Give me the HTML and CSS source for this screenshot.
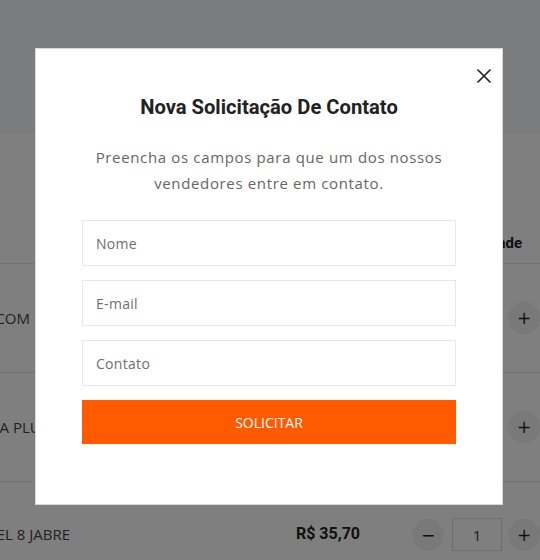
FILE: index.html
```html
<!DOCTYPE html>
<html lang="pt-BR">
<head>
<meta charset="utf-8">
<title>Carrinho</title>
<link rel="stylesheet" href="styles.css">
</head>
<body>
<div class="page">
  <header class="topbar"></header>
  <main class="cart">
    <div class="cart-head">
      <span class="head-qty">Quantidade</span>
    </div>
    <div class="cart-row">
      <div class="name"><span>FONE HEADSET COM FIO 2</span></div>
      <div class="price">R$ 49,90</div>
      <div class="qty">
        <button class="circle">&minus;</button>
        <div class="qty-box">1</div>
        <button class="circle">+</button>
      </div>
    </div>
    <div class="cart-row">
      <div class="name"><span>CAIXA DE SOM ALPHA PLUS 36</span></div>
      <div class="price">R$ 89,90</div>
      <div class="qty">
        <button class="circle">&minus;</button>
        <div class="qty-box">1</div>
        <button class="circle">+</button>
      </div>
    </div>
    <div class="cart-row">
      <div class="name"><span>CABO USB MODEL 8 JABRE</span></div>
      <div class="price">R$ 35,70</div>
      <div class="qty">
        <button class="circle">&minus;</button>
        <div class="qty-box">1</div>
        <button class="circle">+</button>
      </div>
    </div>
  </main>
</div>

<div class="overlay">
  <div class="modal">
    <button class="close" aria-label="Fechar">
      <svg width="16" height="16" viewBox="0 0 16 16"><path d="M1.5 1.5L14.5 14.5M14.5 1.5L1.5 14.5" stroke="#222" stroke-width="1.6" fill="none"/></svg>
    </button>
    <h2 class="title">Nova Solicitação De Contato</h2>
    <p class="subtitle">Preencha os campos para que um dos nossos<br>vendedores entre em contato.</p>
    <form class="form">
      <input class="field" type="text" placeholder="Nome">
      <input class="field" type="email" placeholder="E-mail">
      <input class="field" type="text" placeholder="Contato">
      <button class="submit" type="button">SOLICITAR</button>
    </form>
  </div>
</div>
</body>
</html>
```

FILE: styles.css
```css
* { box-sizing: border-box; }

html, body {
  margin: 0;
  padding: 0;
  overflow: hidden;
  background: #ffffff;
  font-family: "Open Sans", "Liberation Sans", sans-serif;
}

.page {
  width: 540px;
}

.topbar {
  height: 133px;
  background: #f6f8fc;
}

.cart-head {
  height: 131px;
  border-bottom: 1px solid #e6e6e6;
  display: flex;
  align-items: flex-end;
  justify-content: flex-end;
  padding-bottom: 10px;
}

.head-qty {
  width: 128px;
  padding-right: 18px;
  text-align: right;
  font-family: Roboto, "Liberation Sans", sans-serif;
  font-weight: 700;
  font-size: 15px;
  line-height: 20px;
  color: #222;
}

.cart-row {
  height: 109px;
  border-bottom: 1px solid #e6e6e6;
  display: flex;
  align-items: center;
}

.cart-row:last-child {
  align-items: flex-start;
  padding-top: 36px;
}

.name {
  width: 70px;
  flex: none;
  display: flex;
  justify-content: flex-end;
  white-space: nowrap;
  font-size: 15px;
  line-height: 32px;
  color: #444;
}

.price {
  margin-left: auto;
  font-family: Roboto, "Liberation Sans", sans-serif;
  font-weight: 700;
  font-size: 16px;
  line-height: 32px;
  color: #222;
}

.qty {
  margin-left: 52px;
  display: flex;
  align-items: center;
}

.circle {
  width: 32px;
  height: 32px;
  border: none;
  border-radius: 50%;
  background: #f2f2f2;
  color: #222;
  font-family: "DejaVu Sans", sans-serif;
  font-size: 17px;
  line-height: 32px;
  padding: 0;
  text-align: center;
}

.qty-box {
  width: 50px;
  height: 33px;
  margin: 0 6px 0 8px;
  border: 1px solid #dcdcdc;
  display: flex;
  align-items: center;
  justify-content: center;
  font-size: 15px;
  color: #333;
}

.overlay {
  position: fixed;
  inset: 0;
  background: rgba(0, 0, 0, 0.5);
  display: flex;
  align-items: flex-start;
  padding: 48px 0 0 35px;
}

.modal {
  position: relative;
  width: 468px;
  background: #fff;
  border: 1px solid #d8d8d8;
  padding: 46px 46px 60px;
  display: flex;
  flex-direction: column;
  align-items: center;
}

.close {
  position: absolute;
  top: 19px;
  right: 10px;
  width: 16px;
  height: 16px;
  padding: 0;
  border: none;
  background: none;
  display: flex;
}

.title {
  margin: 0;
  font-family: Roboto, "Liberation Sans", sans-serif;
  font-weight: 700;
  font-size: 20.2px;
  line-height: 24px;
  color: #222;
}

.subtitle {
  margin: 25px 0 0;
  text-align: center;
  font-size: 15px;
  line-height: 26px;
  letter-spacing: 0.65px;
  color: #666;
}

.form {
  margin-top: 24px;
  width: 100%;
  display: flex;
  flex-direction: column;
  gap: 14px;
}

.field {
  height: 46px;
  width: 100%;
  border: 1px solid #e5e7eb;
  padding: 0 13px;
  font-family: "Open Sans", "Liberation Sans", sans-serif;
  font-size: 14px;
  letter-spacing: 0.3px;
  color: #333;
  outline: none;
  background: #fff;
}

.field::placeholder {
  color: #6f6f6f;
}

.submit {
  height: 44px;
  width: 100%;
  border: none;
  background: #ff5a00;
  color: #fff;
  font-family: "Open Sans", "Liberation Sans", sans-serif;
  font-size: 14px;
  font-weight: 500;
  letter-spacing: 0;
}
```
